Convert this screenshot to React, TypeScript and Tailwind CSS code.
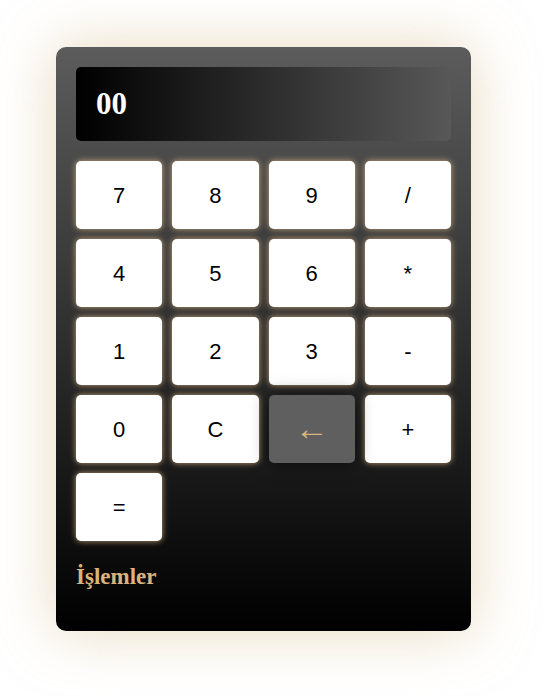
const keys = ['7', '8', '9', '/', '4', '5', '6', '*', '1', '2', '3', '-', '0', 'C', '←', '+', '='];

export default function App() {
    return (
        <div className="min-h-[696px] w-[548px] bg-white pt-[47px] pl-[56px]">
            <div className="w-[415px] h-[584px] rounded-[10px] p-5 bg-[linear-gradient(to_bottom,#5c5c5c,#000000)] shadow-[0_0_60px_rgba(215,190,145,0.6)]">
                {/* Display */}
                <div className="h-[74px] rounded-[5px] bg-[linear-gradient(to_right,#000000,#585858)] flex items-center px-5">
                    <span className="text-[31px] font-bold text-white font-['Liberation_Serif',serif]">00</span>
                </div>

                {/* Keys */}
                <div className="grid grid-cols-4 gap-[10px] mt-5">
                    {keys.map((k) =>
                        k === '←' ? (
                            <button
                                key={k}
                                className="relative z-10 h-[68px] rounded-[5px] bg-[#5f5f5f] text-[#d9b47f] text-[34px] leading-none font-['Liberation_Serif',serif] shadow-[0_0_18px_rgba(0,0,0,0.55)]"
                            >
                                {k}
                            </button>
                        ) : (
                            <button
                                key={k}
                                className="h-[68px] rounded-[5px] bg-white text-black text-[22px] font-['Liberation_Sans',Arial,sans-serif] shadow-[0_0_6px_rgba(222,184,135,0.85)]"
                            >
                                {k}
                            </button>
                        )
                    )}
                </div>

                <h3 className="mt-[22px] text-[23px] leading-[28px] font-bold text-[#d9b47f] font-['Liberation_Serif',serif]">İşlemler</h3>
            </div>
        </div>
    );
}
